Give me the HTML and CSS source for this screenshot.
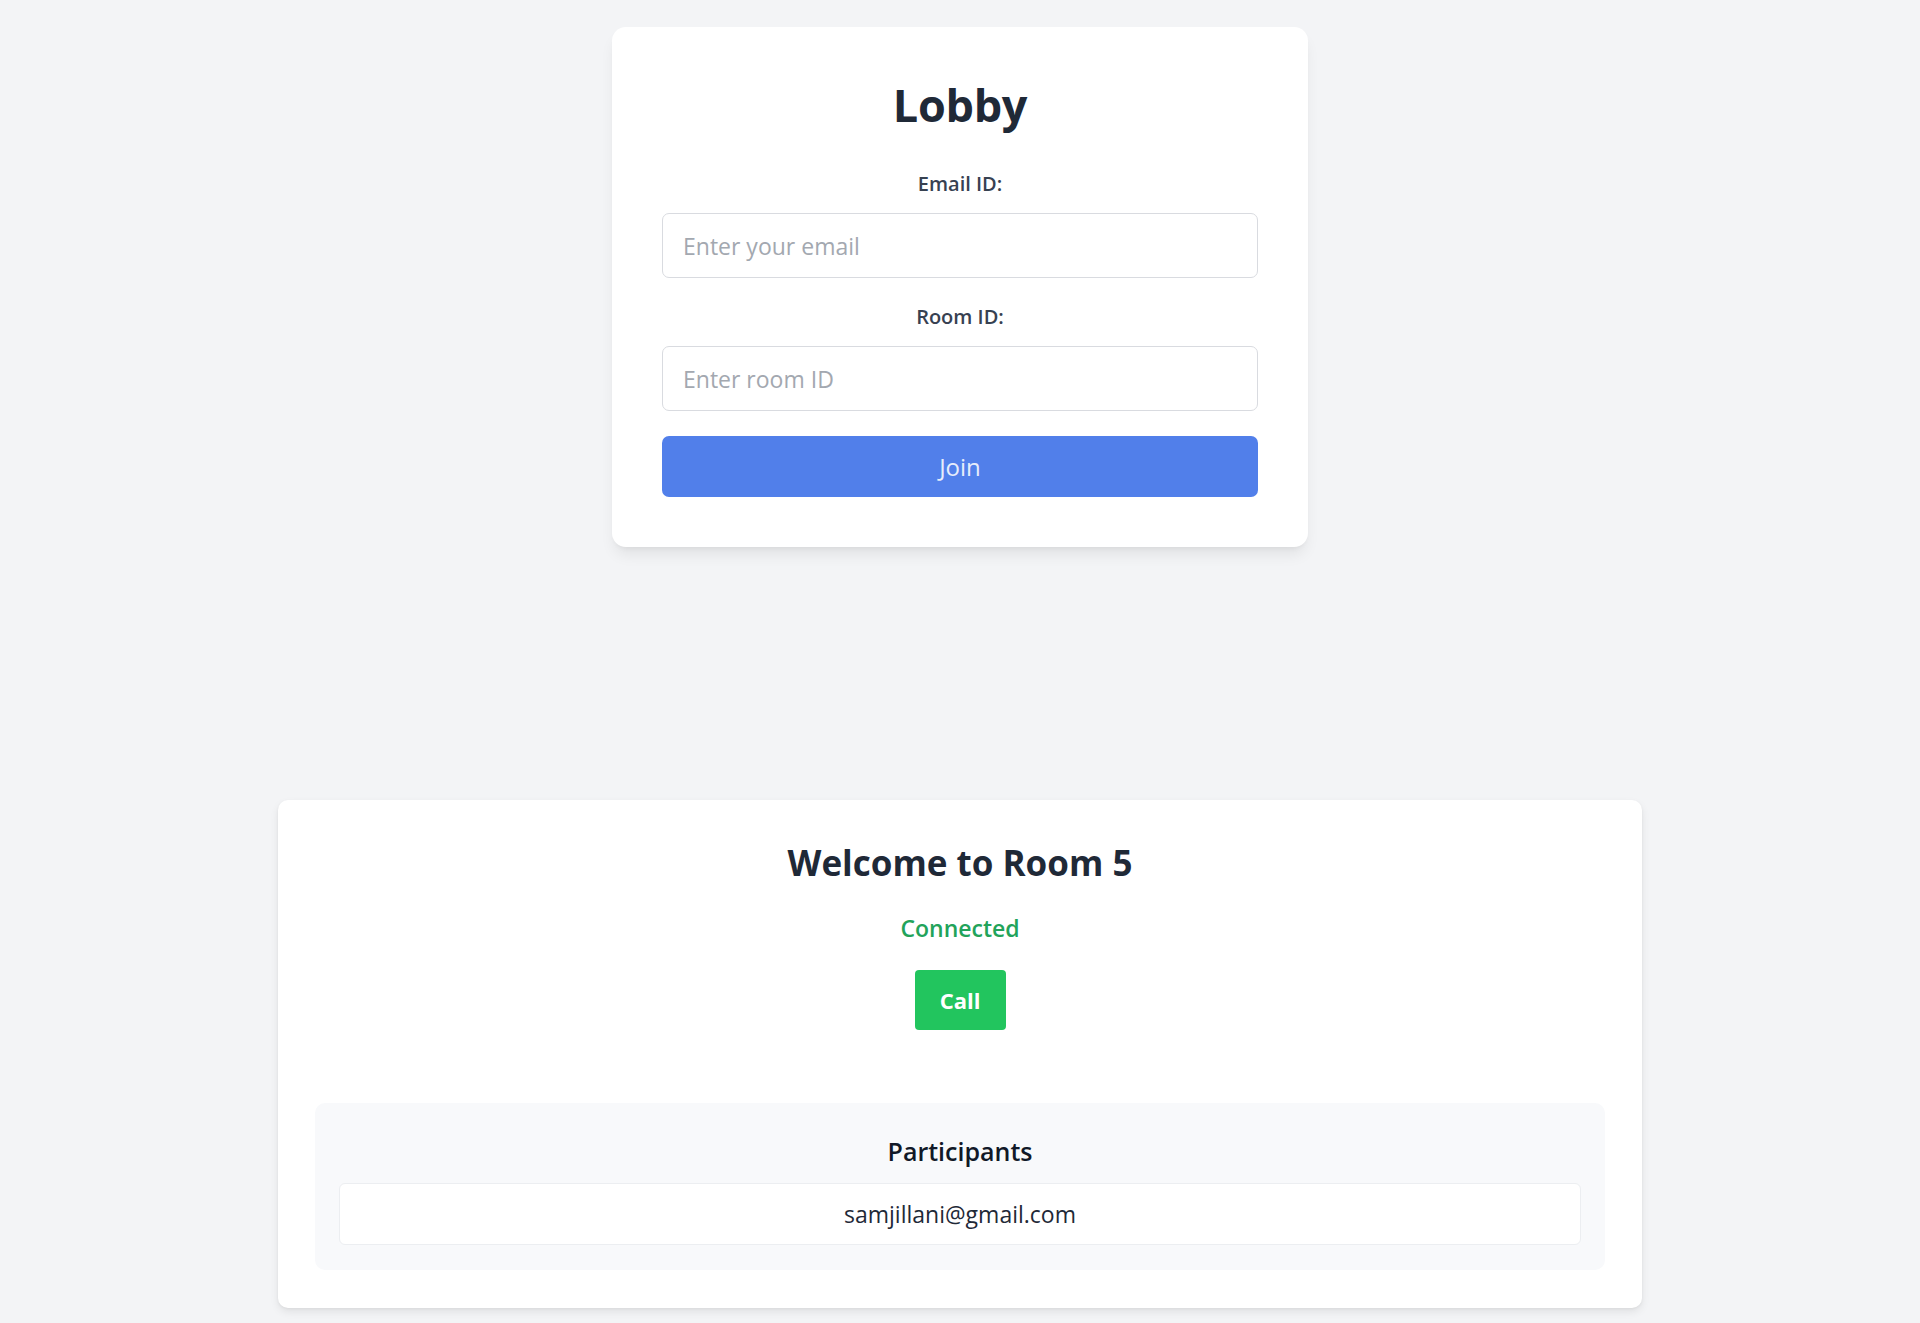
FILE: index.html
```html
<!DOCTYPE html>
<html lang="en">
<head>
<meta charset="utf-8">
<title>Lobby</title>
<link rel="stylesheet" href="styles.css">
</head>
<body>
<main class="page">
  <section class="lobby-card">
    <h1 class="lobby-title">Lobby</h1>
    <form class="lobby-form">
      <label class="field-label" for="email">Email ID:</label>
      <input class="field-input" id="email" type="email" placeholder="Enter your email">
      <label class="field-label" for="room">Room ID:</label>
      <input class="field-input field-input-last" id="room" type="text" placeholder="Enter room ID">
      <button class="join-btn" type="button">Join</button>
    </form>
  </section>

  <section class="room-card">
    <h2 class="room-title">Welcome to Room 5</h2>
    <p class="room-status">Connected</p>
    <button class="call-btn" type="button">Call</button>
    <div class="participants">
      <h3 class="participants-title">Participants</h3>
      <ul class="participant-list">
        <li class="participant-item">samjillani@gmail.com</li>
      </ul>
    </div>
  </section>
</main>
</body>
</html>
```

FILE: styles.css
```css
* { box-sizing: border-box; }

html, body {
  margin: 0;
  padding: 0;
  background: #f3f4f6;
  font-family: "Open Sans", "Noto Sans", sans-serif;
  color: #1f2937;
}

.page {
  display: flex;
  flex-direction: column;
  align-items: center;
  padding-top: 27px;
  padding-bottom: 15px;
}

.lobby-card {
  width: 696px;
  background: #ffffff;
  border-radius: 14px;
  padding: 50px 50px 50px;
  box-shadow: 0 10px 15px -3px rgba(0,0,0,0.08), 0 4px 6px -4px rgba(0,0,0,0.08);
}

.lobby-title {
  margin: 0;
  text-align: center;
  font-size: 45px;
  line-height: 56px;
  font-weight: 700;
  color: #1f2937;
  letter-spacing: -0.3px;
}

.lobby-form {
  display: flex;
  flex-direction: column;
  margin-top: 39px;
}

.field-label {
  display: block;
  text-align: center;
  font-size: 20px;
  line-height: 24px;
  font-weight: 600;
  color: #374151;
  margin-bottom: 17px;
}

.field-input {
  display: block;
  width: 100%;
  height: 65px;
  padding: 0 20px;
  border: 1.5px solid #d9dbe0;
  border-radius: 7px;
  font-family: inherit;
  font-size: 23px;
  color: #1f2937;
  background: #fff;
  margin-bottom: 27px;
  outline: none;
}

.field-input::placeholder { color: #a3a8b0; }

.field-input-last { margin-bottom: 25px; }

.join-btn {
  display: block;
  width: 100%;
  height: 61px;
  border: none;
  border-radius: 7px;
  background: #517fea;
  color: #e6ecfb;
  font-family: inherit;
  font-size: 24px;
  font-weight: 400;
}

.room-card {
  width: 1364px;
  margin-top: 253px;
  background: #ffffff;
  border-radius: 10px;
  padding: 40px 37px 38px;
  display: flex;
  flex-direction: column;
  align-items: center;
  box-shadow: 0 4px 8px rgba(0,0,0,0.08), 0 1px 3px rgba(0,0,0,0.05);
}

.room-title {
  margin: 0;
  font-size: 35px;
  line-height: 46px;
  font-weight: 700;
  color: #1f2937;
}

.room-status {
  margin: 28px 0 0;
  font-size: 23px;
  line-height: 28px;
  font-weight: 600;
  color: #22a35a;
}

.call-btn {
  margin-top: 28px;
  width: 91px;
  height: 60px;
  border: none;
  border-radius: 4px;
  background: #22c55e;
  color: #ffffff;
  font-family: inherit;
  font-size: 22px;
  font-weight: 700;
}

.participants {
  align-self: stretch;
  margin-top: 73px;
  background: #f8f9fb;
  border-radius: 10px;
  padding: 32px 24px 25px;
}

.participants-title {
  margin: 0;
  text-align: center;
  font-size: 25px;
  line-height: 32px;
  font-weight: 600;
  color: #111827;
}

.participant-list {
  list-style: none;
  margin: 16px 0 0;
  padding: 0;
}

.participant-item {
  height: 62px;
  background: #ffffff;
  border: 1.5px solid #eceef1;
  border-radius: 6px;
  display: flex;
  align-items: center;
  justify-content: center;
  font-size: 23px;
  color: #1f2937;
}
```
